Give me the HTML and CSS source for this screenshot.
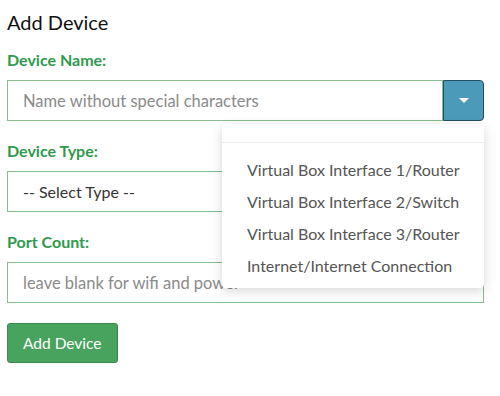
FILE: index.html
```html
<!DOCTYPE html>
<html lang="en">
<head>
    <meta charset="UTF-8">
    <meta name="viewport" content="width=device-width, initial-scale=1.0">
    <title>Add Device</title>
    <link rel="stylesheet" href="styles.css">
</head>
<body>
    <div id="container">
        <h1>Add Device</h1>
        <div class="form-group name-group">
            <label>Device Name:</label>
            <div class="input-row">
                <input type="text" class="field" placeholder="Name without special characters">
                <button class="drop-toggle" type="button"><span class="caret"></span></button>
            </div>
            <ul class="drop-menu">
                <li class="menu-head"></li>
                <li>Virtual Box Interface 1/Router</li>
                <li>Virtual Box Interface 2/Switch</li>
                <li>Virtual Box Interface 3/Router</li>
                <li>Internet/Internet Connection</li>
            </ul>
        </div>
        <div class="form-group">
            <label>Device Type:</label>
            <div class="field select-field">-- Select Type --</div>
        </div>
        <div class="form-group">
            <label>Port Count:</label>
            <input type="text" class="field" placeholder="leave blank for wifi and power">
        </div>
        <button class="submit-btn" type="button">Add Device</button>
    </div>
</body>
</html>
```

FILE: styles.css
```css
body {
    margin: 0;
    font-family: Lato, "Open Sans", sans-serif;
    background-color: #ffffff;
}
#container {
    padding: 8px 16px 0 7px;
}
h1 {
    margin: 0 0 13px 0;
    font-size: 20px;
    line-height: 28px;
    font-weight: normal;
    color: #111;
}
.form-group {
    margin-bottom: 19px;
    position: relative;
}
.form-group:nth-child(4) {
    margin-bottom: 20px;
}
label {
    display: block;
    color: #2f9a4c;
    font-weight: bold;
    font-size: 16px;
    line-height: 22px;
    margin-bottom: 9px;
}
.input-row {
    display: flex;
}
.field {
    box-sizing: border-box;
    width: 100%;
    height: 41px;
    border: 1px solid #84bd8e;
    padding: 0 15px;
    font-family: inherit;
    font-size: 16.5px;
    color: #333;
    outline: none;
    display: flex;
    align-items: center;
}
.select-field {
    font-size: 16px;
}
.field::placeholder {
    color: #8a8a8a;
}
.input-row .field {
    flex: 1;
}
.drop-toggle {
    width: 41px;
    height: 41px;
    background-color: #4b9aba;
    border: 1px solid #234f66;
    border-radius: 0 4px 4px 0;
    display: flex;
    align-items: center;
    justify-content: center;
    padding: 0;
}
.caret {
    width: 0;
    height: 0;
    border-left: 5px solid transparent;
    border-right: 5px solid transparent;
    border-top: 5px solid #ffffff;
}
.drop-menu {
    position: absolute;
    top: 75px;
    left: 215px;
    width: 262px;
    margin: 0;
    padding: 0 0 6px 0;
    list-style: none;
    background-color: #ffffff;
    border-radius: 4px;
    box-shadow: 0 3px 12px rgba(0, 0, 0, 0.16);
    z-index: 10;
}
.drop-menu li {
    padding: 0 0 0 25px;
    line-height: 32px;
    font-size: 16px;
    color: #555;
}
.drop-menu .menu-head {
    height: 18px;
    border-bottom: 1px solid #ececec;
    margin-bottom: 11px;
}
.submit-btn {
    height: 40px;
    padding: 0 15px;
    background-color: #47a35d;
    border: 1px solid #3a8a4d;
    border-radius: 3px;
    color: #ffffff;
    font-family: inherit;
    font-size: 15.5px;
}
```
